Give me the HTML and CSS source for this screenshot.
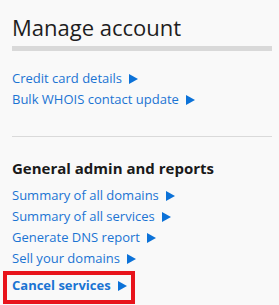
FILE: index.html
```html
<!DOCTYPE html>
<html>
<head>
<meta charset="utf-8">
<link rel="stylesheet" href="styles.css">
</head>
<body>
<div class="panel">
  <h1 class="title">Manage account</h1>
  <div class="bar"></div>
  <ul class="links first">
    <li><a class="link" href="#">Credit card details<svg class="arrow" width="9" height="10" viewBox="0 0 9 10"><polygon points="0,0 9,5 0,10"/></svg></a></li>
    <li><a class="link" href="#">Bulk WHOIS contact update<svg class="arrow" width="9" height="10" viewBox="0 0 9 10"><polygon points="0,0 9,5 0,10"/></svg></a></li>
  </ul>
  <div class="rule"></div>
  <h2 class="subtitle">General admin and reports</h2>
  <ul class="links">
    <li><a class="link" href="#">Summary of all domains<svg class="arrow" width="9" height="10" viewBox="0 0 9 10"><polygon points="0,0 9,5 0,10"/></svg></a></li>
    <li><a class="link" href="#">Summary of all services<svg class="arrow" width="9" height="10" viewBox="0 0 9 10"><polygon points="0,0 9,5 0,10"/></svg></a></li>
    <li><a class="link" href="#">Generate DNS report<svg class="arrow" width="9" height="10" viewBox="0 0 9 10"><polygon points="0,0 9,5 0,10"/></svg></a></li>
    <li><a class="link" href="#">Sell your domains<svg class="arrow" width="9" height="10" viewBox="0 0 9 10"><polygon points="0,0 9,5 0,10"/></svg></a></li>
    <li class="highlight"><a class="link strong" href="#">Cancel services<svg class="arrow" width="9" height="10" viewBox="0 0 9 10"><polygon points="0,0 9,5 0,10"/></svg></a></li>
  </ul>
</div>
</body>
</html>
```

FILE: styles.css
```css
html, body {
  margin: 0;
  padding: 0;
  background: #f9f9f9;
}
body {
  font-family: "Open Sans", "Noto Sans", sans-serif;
}
.panel {
  padding: 12px 7px 0 12px;
}
.title {
  margin: 0;
  font-size: 22px;
  font-weight: 400;
  line-height: 30px;
  color: #1e1e1e;
}
.bar {
  margin-top: 4px;
  height: 5px;
  background: #d9d9d9;
}
.links {
  list-style: none;
  margin: 0;
  padding: 0;
}
.links.first {
  margin-top: 17px;
}
.links li {
  line-height: 21px;
  font-size: 13px;
}
.link {
  color: #1b74d3;
  text-decoration: none;
}
.link.strong {
  font-weight: 700;
}
.arrow {
  fill: #0c72d8;
  margin-left: 7px;
  vertical-align: -1px;
}
.rule {
  margin-top: 26px;
  height: 1px;
  background: #dadada;
}
.subtitle {
  margin: 21px 0 7px;
  font-size: 15px;
  font-weight: 700;
  line-height: 20px;
  color: #1a1a1a;
}
.highlight {
  display: inline-block;
  margin: 2px 0 0 -9px;
  padding: 0 4px 4px 5px;
  border: 4px solid #e8141c;
}
```
